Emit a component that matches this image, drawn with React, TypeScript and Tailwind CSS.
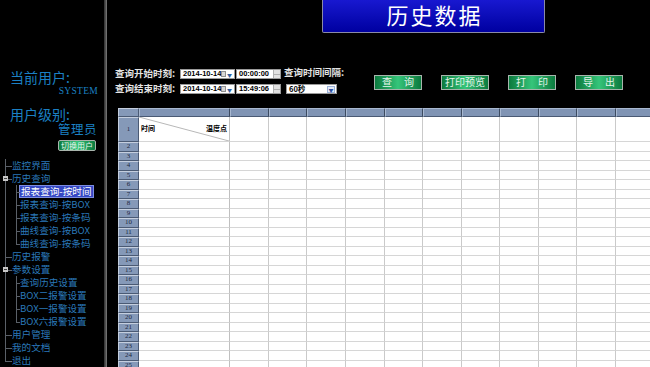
import React from 'react';

const cjk = { fontFamily: '"Noto Sans CJK SC", "DejaVu Sans", sans-serif' };
const serif = { fontFamily: '"Liberation Serif", "Noto Sans CJK SC", serif' };
const num = { fontFamily: '"Liberation Sans", sans-serif' };

type TreeItem = { label: string; level: 0 | 1; box?: boolean; active?: boolean; last?: boolean };

const tree: TreeItem[] = [
  { label: '监控界面', level: 0 },
  { label: '历史查询', level: 0, box: true },
  { label: '报表查询-按时间', level: 1, active: true },
  { label: '报表查询-按BOX', level: 1 },
  { label: '报表查询-按条码', level: 1 },
  { label: '曲线查询-按BOX', level: 1 },
  { label: '曲线查询-按条码', level: 1, last: true },
  { label: '历史报警', level: 0 },
  { label: '参数设置', level: 0, box: true },
  { label: '查询历史设置', level: 1 },
  { label: 'BOX二报警设置', level: 1 },
  { label: 'BOX一报警设置', level: 1 },
  { label: 'BOX六报警设置', level: 1, last: true },
  { label: '用户管理', level: 0 },
  { label: '我的文档', level: 0 },
  { label: '退出', level: 0, last: true },
];

function TreeRow({ item }: { item: TreeItem }) {
  const rootLast = item.level === 0 && item.last;
  return (
    <div className="flex h-[13px] items-center">
      <div className="relative h-full w-[12px] shrink-0">
        <div className={`absolute left-[5px] top-0 w-px bg-[#5a6068] ${rootLast ? 'h-1/2' : 'h-full'}`} />
        {item.level === 0 && <div className="absolute left-[5px] top-1/2 h-px w-[7px] bg-[#5a6068]" />}
        {item.box && (
          <div className="absolute left-[3px] top-[4px] flex h-[5px] w-[5px] items-center justify-center bg-[#c8c8c8]">
            <div className="h-px w-[3px] bg-[#404040]" />
          </div>
        )}
      </div>
      {item.level === 1 && (
        <div className="relative h-full w-[8px] shrink-0">
          <div className={`absolute left-[4px] top-0 w-px bg-[#5a6068] ${item.last ? 'h-1/2' : 'h-full'}`} />
          <div className="absolute left-[4px] top-1/2 h-px w-[4px] bg-[#5a6068]" />
        </div>
      )}
      <span
        className={`whitespace-nowrap text-[9.6px] leading-[11px] ${
          item.active ? 'bg-[#3548c4] px-px text-white outline outline-1 outline-[#7d8ce0]' : 'text-[#2a78b8]'
        }`}
      >
        {item.label}
      </span>
    </div>
  );
}

function GreenButton({ children, className = '' }: { children: React.ReactNode; className?: string }) {
  return (
    <div
      className={`flex items-center justify-center whitespace-nowrap border border-[#a8b4ac] bg-gradient-to-r from-[#0b7a3e] via-[#35c57a] to-[#0b7a3e] text-[#e6f5ec] ${className}`}
    >
      {children}
    </div>
  );
}

function DateBox({ value }: { value: string }) {
  return (
    <div className="flex h-[10px] w-[55px] shrink-0 items-center border border-[#9a9a9a] bg-white pl-[2px]">
      <span className="whitespace-nowrap text-[7.5px] font-bold leading-none text-black" style={num}>
        {value}
      </span>
      <div className="ml-auto h-[6px] w-[5px] border border-[#909090] bg-[#d8d8d8]" />
      <span className="ml-px mr-[2px] text-[5px] leading-none text-[#3060a0]">▼</span>
    </div>
  );
}

function TimeBox({ value }: { value: string }) {
  return (
    <div className="flex h-[10px] w-[45px] shrink-0 items-center border border-[#9a9a9a] bg-white pl-[2px]">
      <span className="whitespace-nowrap text-[7.5px] font-bold leading-none text-black" style={num}>
        {value}
      </span>
      <div className="ml-auto flex h-full w-[7px] flex-col border-l border-[#b0b0b0] bg-[#e0e0e0]">
        <div className="flex-1 border-b border-[#b0b0b0]" />
        <div className="flex-1" />
      </div>
    </div>
  );
}

const colWidths = [91, 38.5, 38.5, 39, 38.5, 38.5, 38.5, 38.5, 38.5, 38.5, 38.5, 38.5];

function GridRow({ n, h }: { n: number; h: string }) {
  return (
    <div className={`flex ${h}`}>
      <div className="flex w-[21px] shrink-0 items-center justify-center border-b border-t border-l border-r border-b-[#4a5a74] border-l-[#c4cede] border-r-[#4a5a74] border-t-[#c4cede] bg-[#8599b8] text-[7px] leading-none text-[#1c2840]" style={serif}>
        {n}
      </div>
      {colWidths.map((w, i) => (
        <div
          key={i}
          className={`relative shrink-0 border-b border-r border-b-[#d6d6d6] ${i === 0 ? 'border-r-[#c0c0c0]' : 'border-r-[#cacaca]'} bg-white`}
          style={{ width: w }}
        >
          {n === 1 && i === 0 && (
            <>
              <svg className="absolute inset-0 h-full w-full" preserveAspectRatio="none" viewBox="0 0 100 100">
                <line x1="0" y1="0" x2="100" y2="100" stroke="#b8b8b8" strokeWidth="1" vectorEffect="non-scaling-stroke" />
              </svg>
              <span className="absolute left-[2px] top-[8px] text-[7px] font-bold leading-none text-black">时间</span>
              <span className="absolute right-[2px] top-[8px] text-[7px] font-bold leading-none text-black">温度点</span>
            </>
          )}
        </div>
      ))}
    </div>
  );
}

function Spaced({ a, b }: { a: string; b: string }) {
  return (
    <span className="flex gap-[12px]">
      <span>{a}</span>
      <span>{b}</span>
    </span>
  );
}

export default function App() {
  const rows = Array.from({ length: 24 }, (_, i) => i + 2);
  return (
    <div className="flex h-[367px] w-[650px] overflow-hidden bg-black" style={cjk}>
      {/* sidebar */}
      <div className="flex w-[104px] shrink-0 flex-col">
        <div className="mt-[69px] pl-[10px] text-[14px] leading-[16px] text-[#1b80c4]">当前用户:</div>
        <div className="mr-[6px] mt-px self-end text-[9.5px] leading-[11px] tracking-[0.3px] text-[#1b80c4]" style={serif}>
          SYSTEM
        </div>
        <div className="mt-[9px] pl-[10px] text-[14px] leading-[16px] text-[#1b80c4]">用户级别:</div>
        <div className="mr-[7px] self-end text-[12.5px] leading-[13px] tracking-[0.5px] text-[#1b80c4]">管理员</div>
        <GreenButton className="mr-[8px] mt-[5px] h-[13px] w-[38px] self-end rounded-[2px] text-[8px] leading-none">切换用户</GreenButton>
        <div className="mt-[8px]">
          {tree.map((t) => (
            <TreeRow key={t.label} item={t} />
          ))}
        </div>
      </div>
      {/* divider */}
      <div className="w-[3px] shrink-0 border-l border-r border-l-[#3a3a3a] border-r-[#707070] bg-[#505050]" />
      {/* main */}
      <div className="flex min-w-0 flex-1 flex-col">
        <div className="ml-[215px] flex h-[33px] w-[223px] items-center justify-center rounded-b-[2px] border border-t-0 border-[#8a8aa8] bg-gradient-to-b from-[#1818d0] to-[#0000a0] pl-[2px] text-[22px] tracking-[2px] text-white" style={serif}>
          历史数据
        </div>
        <div className="ml-[8px] mt-[36px] flex items-center">
          <div className="flex w-[228px] shrink-0 flex-col gap-[5px] text-[9.5px] font-bold leading-none text-[#e4e4e4]">
            <div className="flex h-[10px] items-center whitespace-nowrap">
              <span className="w-[65px] shrink-0">查询开始时刻:</span>
              <DateBox value="2014-10-14" />
              <div className="ml-px"><TimeBox value="00:00:00" /></div>
              <span className="ml-[3px] -mt-[3px]">查询时间间隔:</span>
            </div>
            <div className="flex h-[10px] items-center whitespace-nowrap">
              <span className="w-[65px] shrink-0">查询结束时刻:</span>
              <DateBox value="2014-10-14" />
              <div className="ml-px"><TimeBox value="15:49:06" /></div>
              <div className="ml-[5px] flex h-[10px] w-[51px] shrink-0 items-center border border-[#9a9a9a] bg-white pl-[2px]">
                <span className="text-[7.5px] font-bold leading-none text-black">60秒</span>
                <div className="ml-auto mr-px flex h-[7px] w-[8px] items-center justify-center border border-[#9ab0d8] bg-[#e4ecf8] text-[5px] text-[#3050a0]">▼</div>
              </div>
            </div>
          </div>
          <div className="ml-[31px] mt-[1px] flex gap-[19px] text-[10px] leading-none">
            <GreenButton className="h-[15px] w-[48px]"><Spaced a="查" b="询" /></GreenButton>
            <GreenButton className="h-[15px] w-[48px]">打印预览</GreenButton>
            <GreenButton className="h-[15px] w-[48px]"><Spaced a="打" b="印" /></GreenButton>
            <GreenButton className="h-[15px] w-[48px]"><Spaced a="导" b="出" /></GreenButton>
          </div>
        </div>
        {/* grid */}
        <div className="ml-[11px] mt-[14px] flex flex-col">
          <div className="flex h-[9px]">
            <div className="w-[21px] shrink-0 border border-b-[#4a5a74] border-l-[#c4cede] border-r-[#4a5a74] border-t-[#c4cede] bg-[#8599b8]" />
            {colWidths.map((w, i) => (
              <div
                key={i}
                className="shrink-0 border border-b-[#4a5a74] border-l-[#a8b8d0] border-r-[#3c4a60] border-t-[#a8b8d0] bg-[#8094b4]"
                style={{ width: w }}
              />
            ))}
          </div>
          <GridRow n={1} h="h-[25px]" />
          {rows.map((n) => (
            <GridRow key={n} n={n} h="h-[9.5px]" />
          ))}
        </div>
      </div>
    </div>
  );
}
